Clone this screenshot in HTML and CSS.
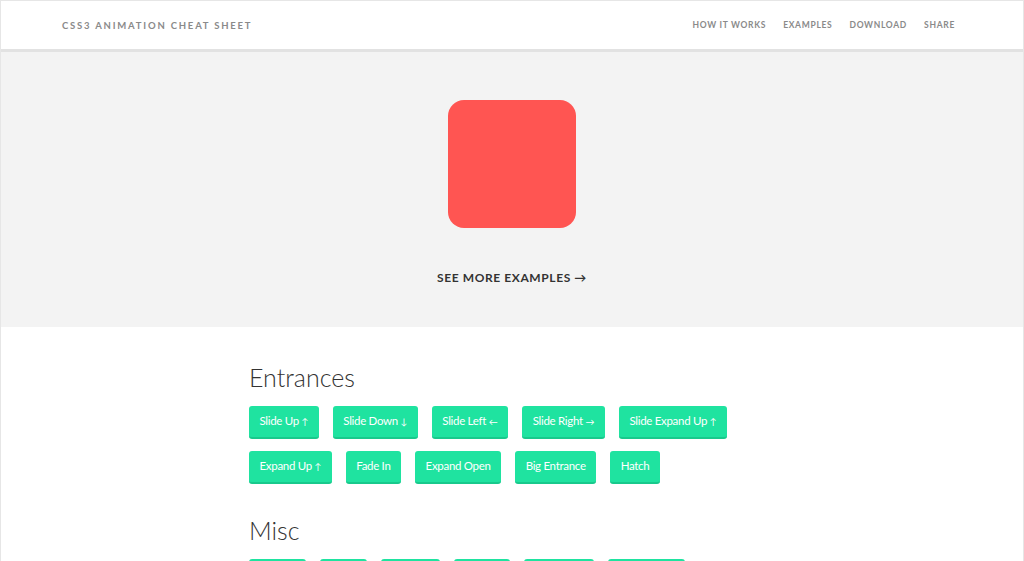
FILE: index.html
```html
<!DOCTYPE html>
<html lang="en">
<head>
  <meta charset="UTF-8">
  <meta name="viewport" content="width=device-width, initial-scale=1.0">
  <title>CSS3 Animation Cheat Sheet</title>
  <link rel="stylesheet" href="styles.css">
</head>
<body>
  <div class="page">
    <header class="site-header">
      <div class="logo">CSS3 Animation Cheat Sheet</div>
      <nav class="nav">
        <a href="#">How it works</a>
        <a href="#">Examples</a>
        <a href="#">Download</a>
        <a href="#">Share</a>
      </nav>
    </header>

    <section class="hero">
      <div class="demo-box"></div>
      <a href="#" class="more-link">See more examples &rarr;</a>
    </section>

    <main class="content">
      <div class="group">
        <h2>Entrances</h2>
        <div class="buttons">
          <a href="#" class="btn">Slide Up <span class="arrow">&uarr;</span></a>
          <a href="#" class="btn">Slide Down <span class="arrow">&darr;</span></a>
          <a href="#" class="btn">Slide Left <span class="arrow">&larr;</span></a>
          <a href="#" class="btn">Slide Right <span class="arrow">&rarr;</span></a>
          <a href="#" class="btn">Slide Expand Up <span class="arrow">&uarr;</span></a>
          <a href="#" class="btn">Expand Up <span class="arrow">&uarr;</span></a>
          <a href="#" class="btn">Fade In</a>
          <a href="#" class="btn">Expand Open</a>
          <a href="#" class="btn">Big Entrance</a>
          <a href="#" class="btn">Hatch</a>
        </div>
      </div>
      <div class="group">
        <h2>Misc</h2>
        <div class="buttons">
          <a href="#" class="btn">Bounce</a>
          <a href="#" class="btn">Pulse</a>
          <a href="#" class="btn">Floating</a>
          <a href="#" class="btn">Tossing</a>
          <a href="#" class="btn">Pull Down</a>
          <a href="#" class="btn">Stretch Left</a>
        </div>
      </div>
    </main>
  </div>
</body>
</html>
```

FILE: styles.css
```css
/* CSS3 animation cheat sheet */
body {
  margin: 0;
  padding: 0;
  font-family: Lato, "Open Sans", sans-serif;
  background-color: #fff;
  overflow: hidden;
  height: 561px;
}

.page {
  border: 1px solid #e6e6e6;
  border-bottom: none;
  min-height: 560px;
}

.site-header {
  height: 48px;
  background-color: #fff;
  border-bottom: 3px solid #e2e2e2;
  display: flex;
  align-items: center;
  justify-content: space-between;
  padding: 0 68px 0 61px;
}

.logo,
.nav a {
  font-size: 8.5px;
  font-weight: 700;
  text-transform: uppercase;
  letter-spacing: 0.7px;
  color: #8a8a8a;
  text-decoration: none;
}

.logo {
  font-size: 9.5px;
  letter-spacing: 1.8px;
}

.nav {
  display: flex;
  gap: 17px;
}

.hero {
  background-color: #f3f3f3;
  height: 275px;
  display: flex;
  flex-direction: column;
  align-items: center;
  padding-top: 48px;
  box-sizing: border-box;
}

.demo-box {
  width: 128px;
  height: 128px;
  background-color: #ff5552;
  border-radius: 16px;
}

.more-link {
  margin-top: 42px;
  font-size: 12px;
  font-weight: 700;
  letter-spacing: 0.6px;
  text-transform: uppercase;
  color: #333;
  text-decoration: none;
}

.content {
  width: 526px;
  margin: 0 auto;
  padding-top: 35px;
}

.group {
  margin-bottom: 31px;
}

.group h2 {
  margin: 0 0 14px;
  font-size: 25px;
  line-height: 30px;
  font-weight: 300;
  color: #333;
}

.buttons {
  display: flex;
  flex-wrap: wrap;
  gap: 12px 14px;
}

.btn {
  display: block;
  padding: 0 10.5px;
  line-height: 30px;
  font-size: 11.5px;
  letter-spacing: -0.3px;
  color: #fff;
  text-decoration: none;
  background-color: #1fe3a0;
  border-bottom: 2px solid #19c98c;
  border-radius: 3px;
}

.btn .arrow {
  font-size: 9px;
  letter-spacing: 0;
}
```
